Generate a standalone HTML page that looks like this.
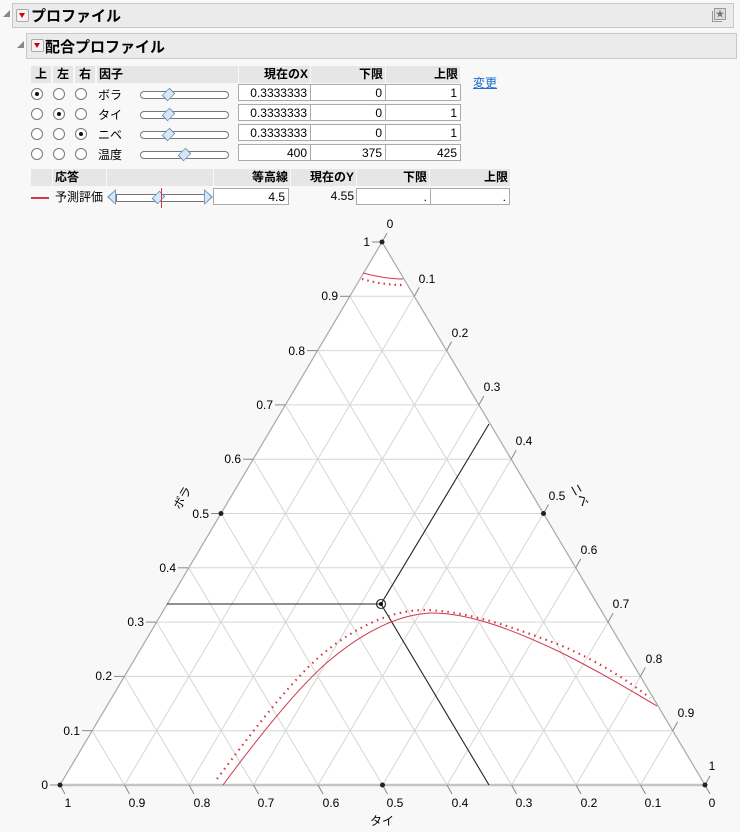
<!DOCTYPE html>
<html><head><meta charset="utf-8"><style>
body{margin:0;width:740px;height:832px;background:#f8f8f8;font-family:"Liberation Sans","Noto Sans CJK JP",sans-serif;position:relative;overflow:hidden;font-size:12px;color:#000}
.a{position:absolute}
.hdr{position:absolute;background:#ebebeb;border:1px solid #c8c8c8;height:23px}
.ttl{position:absolute;font-weight:bold;font-size:15px;top:3px}
.btn{position:absolute;width:11px;height:11px;border:1px solid #aaa;background:#f4f4f4;border-radius:2px;top:6px}
.btn:after{content:"";position:absolute;left:2px;top:3px;border-left:3.5px solid transparent;border-right:3.5px solid transparent;border-top:5px solid #d00}
.th{position:absolute;background:#e6e6e6;height:17px;font-weight:bold;line-height:17px;font-size:12px}
.td{position:absolute;background:#fff;border:1px solid #aaa;height:17px;line-height:17px;text-align:right;box-sizing:border-box;padding-right:3px;font-size:12px}
.r{position:absolute;width:10px;height:10px;border:1px solid #777;border-radius:50%;background:#fff}
.r.on:after{content:"";position:absolute;left:3px;top:3px;width:4px;height:4px;border-radius:50%;background:#111}
.trk{position:absolute;height:6px;border:1px solid #777;border-radius:4px;background:#fff}
.dm{position:absolute;width:9px;height:9px;background:#d8e6f5;border:1px solid #6a8db5;transform:rotate(45deg) scaleX(.75)}
</style></head><body>
<div class="a" style="left:3px;top:10px;width:0;height:0;border-left:7px solid transparent;border-bottom:7px solid #888"></div>
<div class="hdr" style="left:12px;top:3px;width:720px"></div>
<div class="btn" style="left:16px;top:9px"></div>
<div class="ttl" style="left:31px;top:5px">プロファイル</div>
<div class="a" style="left:714px;top:8px;width:10px;height:10px;border:1px solid #999;background:#ddd;color:#777;font-size:9px;line-height:10px;text-align:center">★</div>
<div class="a" style="left:712px;top:11px;width:9px;height:10px;border-left:1px solid #999;border-bottom:1px solid #999"></div>
<div class="a" style="left:17px;top:41px;width:0;height:0;border-left:7px solid transparent;border-bottom:7px solid #888"></div>
<div class="hdr" style="left:26px;top:33px;width:709px;height:24px"></div>
<div class="btn" style="left:31px;top:39px"></div>
<div class="ttl" style="left:45px;top:36px">配合プロファイル</div>

<div class="th" style="left:31px;top:66px;width:20px;text-align:center">上</div>
<div class="th" style="left:53px;top:66px;width:20px;text-align:center">左</div>
<div class="th" style="left:75px;top:66px;width:20px;text-align:center">右</div>
<div class="th" style="left:97px;top:66px;width:32px;padding-left:2px">因子</div>
<div class="th" style="left:131px;top:66px;width:107px"></div>
<div class="th" style="left:239px;top:66px;width:69px;text-align:right;padding-right:2px">現在のX</div>
<div class="th" style="left:311px;top:66px;width:72px;text-align:right;padding-right:2px">下限</div>
<div class="th" style="left:386px;top:66px;width:72px;text-align:right;padding-right:2px">上限</div>
<div class="a" style="left:473px;top:74px;color:#1a6fd0;text-decoration:underline">変更</div>

<div class="r on" style="left:31px;top:88px"></div><div class="r" style="left:53px;top:88px"></div><div class="r" style="left:75px;top:88px"></div>
<div class="r" style="left:31px;top:108px"></div><div class="r on" style="left:53px;top:108px"></div><div class="r" style="left:75px;top:108px"></div>
<div class="r" style="left:31px;top:128px"></div><div class="r" style="left:53px;top:128px"></div><div class="r on" style="left:75px;top:128px"></div>
<div class="r" style="left:31px;top:148px"></div><div class="r" style="left:53px;top:148px"></div><div class="r" style="left:75px;top:148px"></div>
<div class="a" style="left:98px;top:86px">ボラ</div><div class="a" style="left:98px;top:106px">タイ</div><div class="a" style="left:98px;top:126px">ニベ</div><div class="a" style="left:98px;top:146px">温度</div>
<div class="trk" style="left:140px;top:91px;width:87px"></div><div class="dm" style="left:163px;top:89px"></div>
<div class="trk" style="left:140px;top:111px;width:87px"></div><div class="dm" style="left:163px;top:109px"></div>
<div class="trk" style="left:140px;top:131px;width:87px"></div><div class="dm" style="left:163px;top:129px"></div>
<div class="trk" style="left:140px;top:151px;width:87px"></div><div class="dm" style="left:179px;top:149px"></div>

<div class="td" style="left:238px;top:84px;width:73px">0.3333333</div><div class="td" style="left:310px;top:84px;width:76px">0</div><div class="td" style="left:385px;top:84px;width:76px">1</div>
<div class="td" style="left:238px;top:104px;width:73px">0.3333333</div><div class="td" style="left:310px;top:104px;width:76px">0</div><div class="td" style="left:385px;top:104px;width:76px">1</div>
<div class="td" style="left:238px;top:124px;width:73px">0.3333333</div><div class="td" style="left:310px;top:124px;width:76px">0</div><div class="td" style="left:385px;top:124px;width:76px">1</div>
<div class="td" style="left:238px;top:144px;width:73px">400</div><div class="td" style="left:310px;top:144px;width:76px">375</div><div class="td" style="left:385px;top:144px;width:76px">425</div>

<div class="th" style="left:31px;top:169px;width:21px"></div>
<div class="th" style="left:53px;top:169px;width:51px;padding-left:2px">応答</div>
<div class="th" style="left:107px;top:169px;width:106px"></div>
<div class="th" style="left:214px;top:169px;width:74px;text-align:right;padding-right:2px">等高線</div>
<div class="th" style="left:291px;top:169px;width:63px;text-align:right;padding-right:2px">現在のY</div>
<div class="th" style="left:357px;top:169px;width:70px;text-align:right;padding-right:2px">下限</div>
<div class="th" style="left:430px;top:169px;width:78px;text-align:right;padding-right:2px">上限</div>
<div class="a" style="left:31px;top:197px;width:18px;height:2px;background:#d2374b"></div>
<div class="a" style="left:55px;top:188px">予測評価</div>
<div class="trk" style="left:116px;top:194px;width:87px;border-radius:0"></div>
<div class="a" style="left:107px;top:189px;width:0;height:0;border-top:8px solid transparent;border-bottom:8px solid transparent;border-right:9px solid #7a9cc4"></div>
<div class="a" style="left:109px;top:191px;width:0;height:0;border-top:6px solid transparent;border-bottom:6px solid transparent;border-right:6px solid #d8e6f5"></div>
<div class="a" style="left:204px;top:189px;width:0;height:0;border-top:8px solid transparent;border-bottom:8px solid transparent;border-left:9px solid #7a9cc4"></div>
<div class="a" style="left:205px;top:191px;width:0;height:0;border-top:6px solid transparent;border-bottom:6px solid transparent;border-left:6px solid #d8e6f5"></div>
<div class="dm" style="left:153px;top:192px"></div>
<div class="a" style="left:161px;top:188px;width:1px;height:20px;background:#d2374b"></div>
<div class="td" style="left:213px;top:188px;width:76px">4.5</div>
<div class="a" style="left:291px;top:188px;width:63px;text-align:right;line-height:17px">4.55</div>
<div class="td" style="left:356px;top:188px;width:75px">.</div>
<div class="td" style="left:430px;top:188px;width:80px">.</div>

<svg class="a" style="left:0;top:0" width="740" height="832" font-family="Liberation Sans, sans-serif" font-size="12">
<polygon points="382,242 60,785 705,785" fill="#fff"/>
<g stroke="#d6d6d6" stroke-width="1" fill="none">
<line x1="92.2" y1="730.7" x2="672.7" y2="730.7"/><line x1="124.4" y1="676.4" x2="640.4" y2="676.4"/><line x1="156.6" y1="622.1" x2="608.1" y2="622.1"/><line x1="188.8" y1="567.8" x2="575.8" y2="567.8"/><line x1="221" y1="513.5" x2="543.5" y2="513.5"/><line x1="253.2" y1="459.2" x2="511.2" y2="459.2"/><line x1="285.4" y1="404.9" x2="478.9" y2="404.9"/><line x1="317.6" y1="350.6" x2="446.6" y2="350.6"/><line x1="349.8" y1="296.3" x2="414.3" y2="296.3"/>
<line x1="640.5" y1="785" x2="349.8" y2="296.3"/><line x1="576" y1="785" x2="317.6" y2="350.6"/><line x1="511.5" y1="785" x2="285.4" y2="404.9"/><line x1="447" y1="785" x2="253.2" y2="459.2"/><line x1="382.5" y1="785" x2="221" y2="513.5"/><line x1="318" y1="785" x2="188.8" y2="567.8"/><line x1="253.5" y1="785" x2="156.6" y2="622.1"/><line x1="189" y1="785" x2="124.4" y2="676.4"/><line x1="124.5" y1="785" x2="92.2" y2="730.7"/>
<line x1="124.5" y1="785" x2="414.3" y2="296.3"/><line x1="189" y1="785" x2="446.6" y2="350.6"/><line x1="253.5" y1="785" x2="478.9" y2="404.9"/><line x1="318" y1="785" x2="511.2" y2="459.2"/><line x1="382.5" y1="785" x2="543.5" y2="513.5"/><line x1="447" y1="785" x2="575.8" y2="567.8"/><line x1="511.5" y1="785" x2="608.1" y2="622.1"/><line x1="576" y1="785" x2="640.4" y2="676.4"/><line x1="640.5" y1="785" x2="672.7" y2="730.7"/>
</g>
<g stroke="#a8a8a8" stroke-width="1.2" fill="none">
<polygon points="382,242 60,785 705,785"/>
</g>
<line x1="60" y1="785" x2="705" y2="785" stroke="#c4c4c4" stroke-width="2.5"/>
<g stroke="#888" stroke-width="1">
<line x1="50" y1="785" x2="60" y2="785"/><line x1="82" y1="730.7" x2="92" y2="730.7"/><line x1="114" y1="676.4" x2="124" y2="676.4"/><line x1="146" y1="622.1" x2="156" y2="622.1"/><line x1="178" y1="567.8" x2="188" y2="567.8"/><line x1="211" y1="513.5" x2="221" y2="513.5"/><line x1="243" y1="459.2" x2="253" y2="459.2"/><line x1="275" y1="404.9" x2="285" y2="404.9"/><line x1="307" y1="350.6" x2="317" y2="350.6"/><line x1="340" y1="296.3" x2="350" y2="296.3"/><line x1="372" y1="242" x2="382" y2="242"/>
<line x1="60" y1="785" x2="65" y2="794"/><line x1="124.5" y1="785" x2="129.5" y2="794"/><line x1="189" y1="785" x2="194" y2="794"/><line x1="253.5" y1="785" x2="258.5" y2="794"/><line x1="318" y1="785" x2="323" y2="794"/><line x1="382.5" y1="785" x2="387.5" y2="794"/><line x1="447" y1="785" x2="452" y2="794"/><line x1="511.5" y1="785" x2="516.5" y2="794"/><line x1="576" y1="785" x2="581" y2="794"/><line x1="640.5" y1="785" x2="645.5" y2="794"/><line x1="705" y1="785" x2="710" y2="794"/>
<line x1="382" y1="242" x2="387" y2="233"/><line x1="414.3" y1="296.3" x2="419.3" y2="287.3"/><line x1="446.6" y1="350.6" x2="451.6" y2="341.6"/><line x1="478.9" y1="404.9" x2="483.9" y2="395.9"/><line x1="511.2" y1="459.2" x2="516.2" y2="450.2"/><line x1="543.5" y1="513.5" x2="548.5" y2="504.5"/><line x1="575.8" y1="567.8" x2="580.8" y2="558.8"/><line x1="608.1" y1="622.1" x2="613.1" y2="613.1"/><line x1="640.4" y1="676.4" x2="645.4" y2="667.4"/><line x1="672.7" y1="730.7" x2="677.7" y2="721.7"/><line x1="705" y1="785" x2="710" y2="776"/>
</g>
<g fill="#000" text-anchor="end">
<text x="48" y="789">0</text><text x="80" y="735">0.1</text><text x="112" y="680">0.2</text><text x="144" y="626">0.3</text><text x="176" y="572">0.4</text><text x="209" y="518">0.5</text><text x="241" y="463">0.6</text><text x="273" y="409">0.7</text><text x="305" y="355">0.8</text><text x="338" y="300">0.9</text><text x="370" y="246">1</text>
</g>
<g fill="#000" text-anchor="middle">
<text x="68" y="807">1</text><text x="137" y="807">0.9</text><text x="202" y="807">0.8</text><text x="266" y="807">0.7</text><text x="331" y="807">0.6</text><text x="395" y="807">0.5</text><text x="460" y="807">0.4</text><text x="524" y="807">0.3</text><text x="589" y="807">0.2</text><text x="653" y="807">0.1</text><text x="712" y="807">0</text>
<text x="390" y="228">0</text><text x="427" y="283">0.1</text><text x="460" y="337">0.2</text><text x="492" y="391">0.3</text><text x="524" y="445">0.4</text><text x="557" y="500">0.5</text><text x="589" y="554">0.6</text><text x="621" y="608">0.7</text><text x="654" y="663">0.8</text><text x="686" y="717">0.9</text><text x="712" y="770">1</text>
<text x="382" y="825">タイ</text>
<text transform="translate(186,500) rotate(-60)">ボラ</text>
<text transform="translate(576,497) rotate(60)">ニベ</text>
</g>
<g stroke="#222" stroke-width="1.1" fill="none">
<line x1="167" y1="604" x2="381" y2="604"/><line x1="381" y1="604" x2="489" y2="424"/><line x1="381" y1="604" x2="489" y2="785"/>
<circle cx="381" cy="604" r="4.5"/>
</g>
<circle cx="381" cy="604" r="2" fill="#111"/>
<g fill="#222"><circle cx="382" cy="242" r="2.5"/><circle cx="60" cy="785" r="2.5"/><circle cx="705" cy="785" r="2.5"/><circle cx="221" cy="513.5" r="2.5"/><circle cx="543.5" cy="513.5" r="2.5"/><circle cx="382.5" cy="785" r="2.5"/></g>
<g fill="none" stroke="#d2374b">
<path d="M223,785 C260,735 300,685 330,660 C360,635 395,615 430,613 C470,612 520,633 560,652 C600,672 630,690 657,706" stroke-width="1"/>
<path d="M217,779 C255,728 295,676 325,652 C355,628 390,610 425,610 C470,611 520,630 560,645 C600,662 630,682 650,698" stroke-width="2.2" stroke-dasharray="1.5 4.5"/>
<path d="M363,273 C378,277 392,279 403,279" stroke-width="1"/>
<path d="M362,279 C375,283 390,285 403,285" stroke-width="2.2" stroke-dasharray="1.5 4"/>
</g>
</svg>
</body></html>
